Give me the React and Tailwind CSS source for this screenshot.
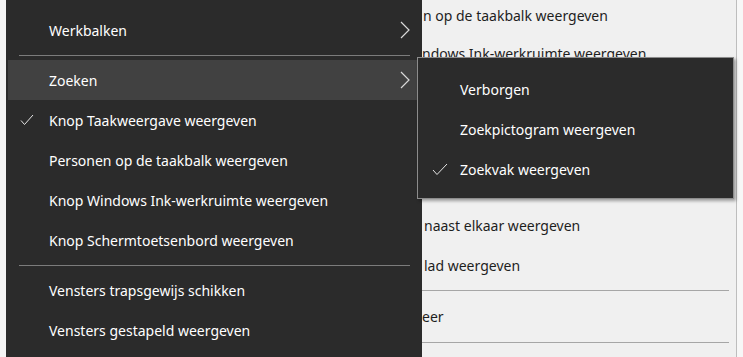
import React from "react";

const Check = () => (
  <svg width="14" height="12" viewBox="0 0 14 12" fill="none">
    <path d="M1 6.5 L4.5 10.5 L13 1" stroke="#e6e6e6" strokeWidth="1" />
  </svg>
);

const Chevron = () => (
  <svg width="10" height="18" viewBox="0 0 10 18" fill="none">
    <path d="M1 1 L9 9 L1 17" stroke="#d9d9d9" strokeWidth="1.2" />
  </svg>
);

function Item({ label, checked, sub, active }) {
  return (
    <div className={`h-[40px] flex items-center text-white ${active ? "bg-[#414141]" : ""}`}>
      <div className="w-[41px] pl-[12px] flex items-center">{checked && <Check />}</div>
      <div className="flex-1">{label}</div>
      {sub && (
        <div className="pr-[10px] flex items-center">
          <Chevron />
        </div>
      )}
    </div>
  );
}

function Sep() {
  return (
    <div className="h-[10px] flex items-center pl-[11px] pr-[10px]">
      <div className="h-px w-full bg-[#7c7c7c]" />
    </div>
  );
}

export default function App() {
  return (
    <div
      className="relative w-[743px] h-[357px] overflow-hidden flex bg-[#f0f0f0] text-[14px]"
      style={{ fontFamily: '"Noto Sans", "Open Sans", sans-serif' }}
    >
      <div className="w-[6px] bg-[#f4f4f4]" />
      <div className="w-[416px] bg-[#2b2b2b] pt-[10px] px-[2px] shrink-0">
        <Item label="Werkbalken" sub />
        <Sep />
        <Item label="Zoeken" sub active />
        <Item label="Knop Taakweergave weergeven" checked />
        <Item label="Personen op de taakbalk weergeven" />
        <Item label="Knop Windows Ink-werkruimte weergeven" />
        <Item label="Knop Schermtoetsenbord weergeven" />
        <Sep />
        <Item label="Vensters trapsgewijs schikken" />
        <Item label="Vensters gestapeld weergeven" />
      </div>
      <div className="flex-1 flex">
        <div className="flex-1 flex flex-col text-[#1e1e1e] overflow-hidden">
          <div className="h-[30px] flex items-center pl-[1px] whitespace-nowrap">n op de taakbalk weergeven</div>
          <div className="h-[46px] flex items-center whitespace-nowrap">ndows Ink-werkruimte weergeven</div>
          <div className="h-[129px]" />
          <div className="h-[40px] flex items-center pl-[2px] whitespace-nowrap">naast elkaar weergeven</div>
          <div className="h-[40px] flex items-center pl-[2px] whitespace-nowrap">lad weergeven</div>
          <div className="h-[10px] flex items-center pr-[7px]">
            <div className="h-px w-full bg-[#a6a6a6]" />
          </div>
          <div className="h-[42px] flex items-center whitespace-nowrap">eer</div>
          <div className="h-[10px] flex items-center pr-[7px]">
            <div className="h-px w-full bg-[#a6a6a6]" />
          </div>
        </div>
        <div className="w-px bg-[#bdbdbd]" />
        <div className="w-[6px] bg-[#f7f7f7]" />
      </div>

      <div className="absolute left-[417px] top-[57px] w-[317px] h-[142px] bg-[#2b2b2b] border border-[#8c8c8c] shadow-[2px_2px_3px_rgba(0,0,0,0.35)] text-white">
        <div className="pt-[11px]">
          <div className="h-[40px] flex items-center pl-[42px]">Verborgen</div>
          <div className="h-[40px] flex items-center pl-[42px]">Zoekpictogram weergeven</div>
          <div className="h-[40px] flex items-center">
            <div className="w-[42px] pl-[14px] flex items-center">
              <svg width="16" height="13" viewBox="0 0 16 13" fill="none">
                <path d="M1 7 L5 11.5 L15 1" stroke="#e6e6e6" strokeWidth="1" />
              </svg>
            </div>
            Zoekvak weergeven
          </div>
        </div>
      </div>
    </div>
  );
}
